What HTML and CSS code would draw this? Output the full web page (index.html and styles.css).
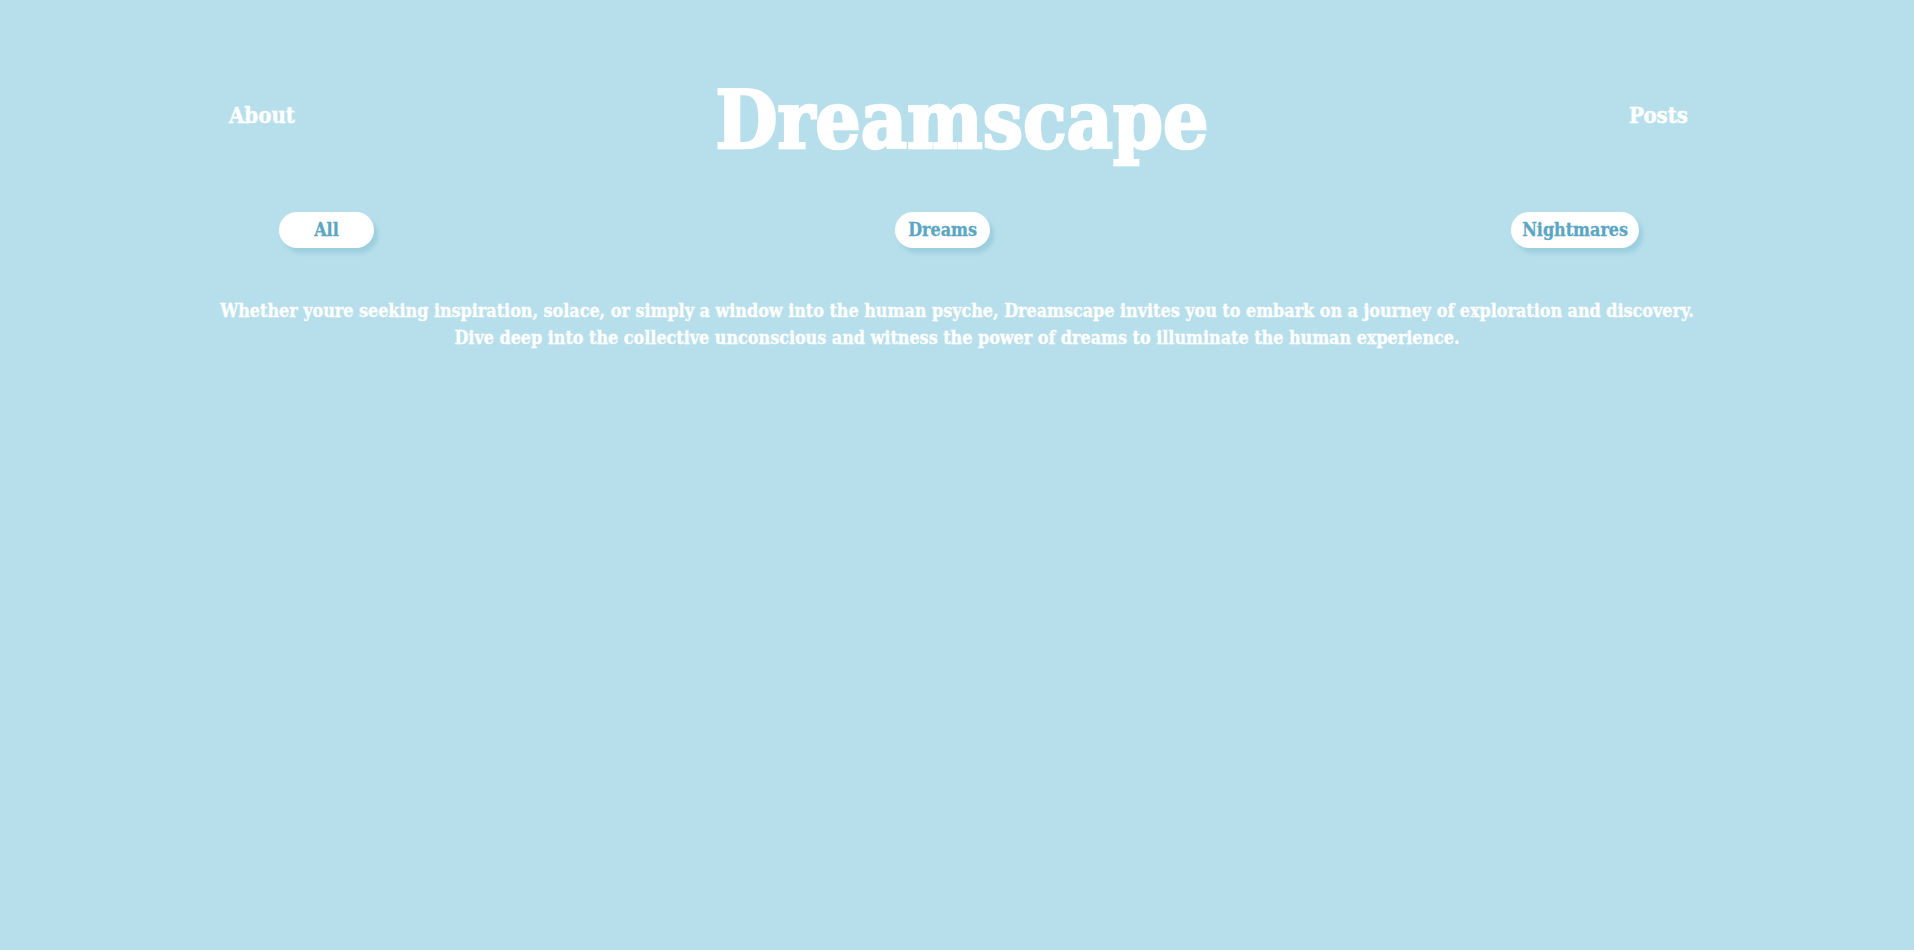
FILE: index.html
```html
<!DOCTYPE html>
<html lang="en">
<head>
<meta charset="utf-8">
<title>Dreamscape</title>
<link rel="stylesheet" href="styles.css">
</head>
<body>
<header class="site-header">
  <a class="nav-link" href="#">About</a>
  <h1 class="brand">Dreamscape</h1>
  <a class="nav-link" href="#">Posts</a>
</header>
<nav class="filters">
  <button class="pill">All</button>
  <button class="pill">Dreams</button>
  <button class="pill">Nightmares</button>
</nav>
<p class="intro">Whether youre seeking inspiration, solace, or simply a window into the human psyche, Dreamscape invites you to embark on a journey of exploration and discovery. Dive deep into the collective unconscious and witness the power of dreams to illuminate the human experience.</p>
</body>
</html>
```
FILE: styles.css
```css
html, body {
  margin: 0;
  padding: 0;
}
body {
  background: #b7dfeb;
  min-height: 950px;
  font-family: "DejaVu Serif", "Liberation Serif", serif;
  font-stretch: condensed;
  font-weight: bold;
  color: #ffffff;
}
.site-header {
  display: flex;
  justify-content: space-between;
  align-items: center;
  padding: 73px 226px 0 229px;
}
.nav-link {
  color: #ffffff;
  text-decoration: none;
  font-size: 22px;
  line-height: 1.2;
  margin-bottom: 11px;
  -webkit-text-stroke: 0.4px #ffffff;
}
.brand {
  margin: 0;
  font-size: 79.5px;
  line-height: 1.2;
  font-weight: bold;
  -webkit-text-stroke: 2.5px #ffffff;
}
.filters {
  display: flex;
  justify-content: space-between;
  padding: 44px 275px 0 279px;
}
.pill {
  box-sizing: border-box;
  height: 36px;
  min-width: 95px;
  padding: 0 11px;
  border: none;
  border-radius: 18px;
  background: #ffffff;
  color: #5aa6c4;
  font-family: inherit;
  font-stretch: condensed;
  font-weight: bold;
  font-size: 17.8px;
  line-height: 36px;
  -webkit-text-stroke: 0.3px #5aa6c4;
  box-shadow: 4px 5px 4px rgba(90, 160, 190, 0.28);
  cursor: pointer;
}
.intro {
  width: 1500px;
  margin: 49px auto 0;
  text-align: center;
  font-size: 17.8px;
  line-height: 27px;
  -webkit-text-stroke: 0.3px #ffffff;
}
```
